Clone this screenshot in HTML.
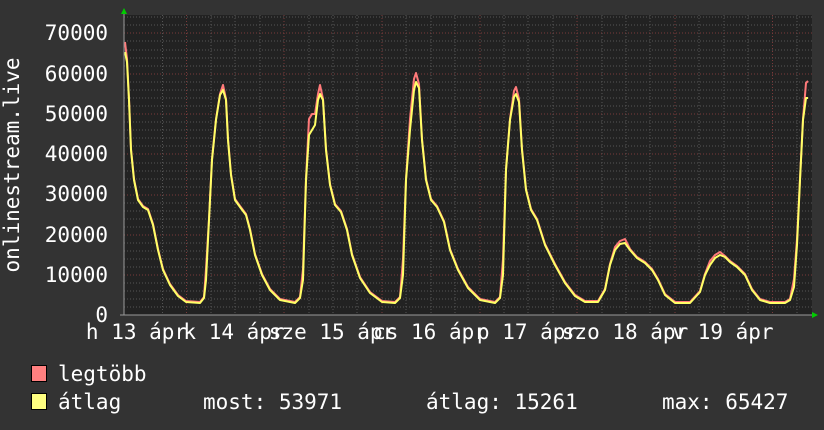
<!DOCTYPE html>
<html><head><meta charset="utf-8"><style>
html,body{margin:0;padding:0;background:#333333;}
svg{display:block}
text{font-family:"DejaVu Sans Mono","Liberation Mono",monospace;font-size:21px;fill:#ffffff}
</style></head><body>
<svg width="824" height="430" xmlns="http://www.w3.org/2000/svg">
<rect width="824" height="430" fill="#333333"/>
<rect x="124" y="15" width="688" height="300" fill="#222222"/>
<g stroke="#555555" stroke-width="1" stroke-dasharray="1,2">
<path d="M124 307H812M124 299H812M124 291H812M124 283H812M124 267H812M124 259H812M124 251H812M124 243H812M124 227H812M124 219H812M124 211H812M124 203H812M124 187H812M124 179H812M124 171H812M124 163H812M124 146H812M124 138H812M124 130H812M124 122H812M124 106H812M124 98H812M124 90H812M124 82H812M124 66H812M124 58H812M124 50H812M124 41H812M124 25H812M124 17H812"/>
<path d="M162.5 15V315M211 15V315M235 15V315M260 15V315M309 15V315M333 15V315M357 15V315M406 15V315M431 15V315M455 15V315M504 15V315M528 15V315M553 15V315M602 15V315M626 15V315M650 15V315M699 15V315M724 15V315M748 15V315M797 15V315"/>
</g>
<g stroke="#7a3a3a" stroke-width="1" stroke-dasharray="1,2">
<path d="M124 275H812M124 235H812M124 195H812M124 154H812M124 114H812M124 74H812M124 33H812"/>
<path d="M186.5 15V315M284 15V315M382 15V315M480 15V315M577 15V315M675 15V315M772.5 15V315"/>
</g>
<polyline fill="none" stroke="#ff7a7a" stroke-width="2" stroke-linejoin="round" transform="translate(0,-1)" points="125,43 127,60 129,100 131,150 134,180 138,200 143,207 148,210 153,225 158,250 163,270 170,285 178,296 186,302 200,303 204,298 206,270 209,220 212,160 216,120 220,95 223,86 226,100 228,140 231,175 235,200 240,207 246,215 250,230 255,255 262,275 270,290 280,300 295,303 300,298 303,270 306,180 309,120 312,115 315,115 318,95 320,86 323,100 326,150 330,185 335,205 341,212 347,230 352,255 360,278 370,293 382,302 395,303 400,298 403,260 406,180 410,120 414,80 416,74 419,85 422,140 426,180 431,200 437,207 444,222 450,250 458,270 468,288 480,300 495,303 500,298 503,260 506,170 510,120 514,92 516,88 519,100 522,150 526,190 531,210 537,220 545,245 555,265 565,283 575,296 585,302 598,302 605,290 610,265 615,248 620,242 625,240 630,250 637,258 645,263 652,270 658,280 665,295 675,303 690,303 700,292 705,275 710,262 715,256 720,253 725,257 730,262 737,267 745,275 752,290 760,300 770,303 785,303 790,300 794,280 797,240 800,180 803,120 806,84 808,82"/>
<polyline fill="none" stroke="#ffff66" stroke-width="2" stroke-linejoin="round" points="125,52 127,62 129,100 131,150 134,180 138,200 143,207 148,210 153,225 158,250 163,270 170,285 178,296 186,302 200,303 204,298 206,280 209,220 212,160 216,120 220,95 223,90 226,100 228,140 231,175 235,200 240,207 246,215 250,230 255,255 262,275 270,290 280,300 295,303 300,298 303,280 306,180 309,135 312,130 315,125 318,100 320,94 323,100 326,150 330,185 335,205 341,212 347,230 352,255 360,278 370,293 382,302 395,303 400,298 403,275 406,180 410,130 414,90 416,82 419,88 422,140 426,180 431,200 437,207 444,222 450,250 458,270 468,288 480,300 495,303 500,298 503,275 506,170 510,120 514,97 516,94 519,102 522,150 526,190 531,210 537,220 545,245 555,265 565,283 575,296 585,302 598,302 605,290 610,265 615,250 620,244 625,243 630,250 637,258 645,263 652,270 658,280 665,295 675,303 690,303 700,292 705,275 710,265 715,258 720,255 725,257 730,262 737,267 745,275 752,290 760,300 770,303 785,303 790,300 794,287 797,245 800,180 803,120 806,98 808,98"/>
<path d="M120 315H812" stroke="#999" stroke-width="1"/>
<path d="M124 315V12" stroke="#999" stroke-width="1"/>
<polygon points="121,14 127,14 124,8" fill="#00cc00"/>
<polygon points="812,312 812,318 818,315" fill="#00cc00"/>
<g text-anchor="end">
<text x="108" y="322">0</text>
<text x="108" y="282">10000</text>
<text x="108" y="242">20000</text>
<text x="108" y="201">30000</text>
<text x="108" y="161">40000</text>
<text x="108" y="121">50000</text>
<text x="108" y="81">60000</text>
<text x="108" y="40">70000</text>
</g>
<text transform="translate(19,165) rotate(-90)" text-anchor="middle">onlinestream.live</text>
<g text-anchor="middle">
<text x="136.5" y="339">h 13 ápr</text>
<text x="234" y="339">k 14 ápr</text>
<text x="332" y="339">sze 15 ápr</text>
<text x="430" y="339">cs 16 ápr</text>
<text x="527.5" y="339">p 17 ápr</text>
<text x="625" y="339">szo 18 ápr</text>
<text x="723" y="339">v 19 ápr</text>
</g>
<rect x="31.5" y="365.5" width="15" height="16" fill="#ff8080" stroke="#000"/>
<rect x="31.5" y="393.5" width="15" height="16" fill="#ffff80" stroke="#000"/>
<text x="58" y="381">legtöbb</text>
<text x="58" y="409">átlag</text>
<text x="203" y="409">most: 53971</text>
<text x="426" y="409">átlag: 15261</text>
<text x="662" y="409">max: 65427</text>
</svg>
</body></html>
